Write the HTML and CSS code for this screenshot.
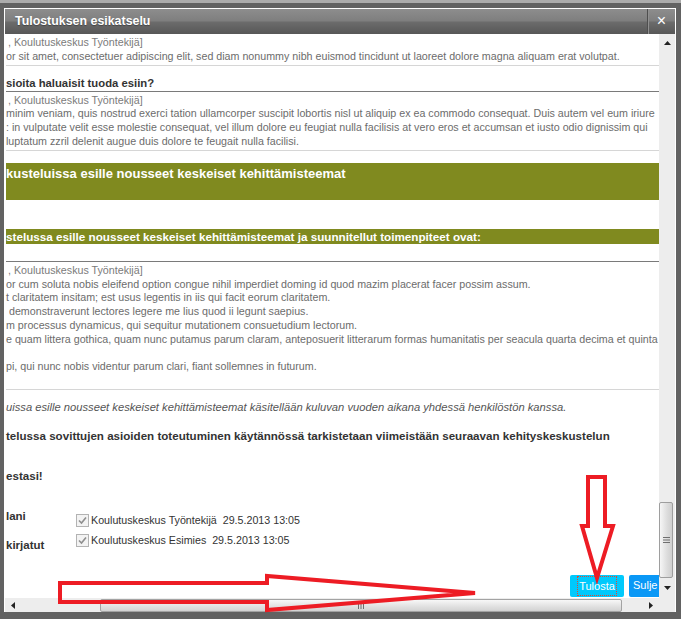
FILE: index.html
```html
<!DOCTYPE html>
<html lang="fi">
<head>
<meta charset="utf-8">
<title>Tulostuksen esikatselu</title>
<link rel="stylesheet" href="styles.css">
</head>
<body>
<div class="topstrip"></div>
<div class="dialog">
  <div class="titlebar">
    <span class="title">Tulostuksen esikatselu</span>
    <span class="close">×</span>
  </div>
  <div class="main">
    <div class="content">
      <div class="doc">
        <div class="comment">
          <div class="meta">, Koulutuskeskus Työntekijä]</div>
          <div class="text">or sit amet, consectetuer adipiscing elit, sed diam nonummy nibh euismod tincidunt ut laoreet dolore magna aliquam erat volutpat.</div>
        </div>
        <div class="question">sioita haluaisit tuoda esiin?</div>
        <div class="comment c2">
          <div class="meta">, Koulutuskeskus Työntekijä]</div>
          <div class="text">minim veniam, quis nostrud exerci tation ullamcorper suscipit lobortis nisl ut aliquip ex ea commodo consequat. Duis autem vel eum iriure</div>
          <div class="text">: in vulputate velit esse molestie consequat, vel illum dolore eu feugiat nulla facilisis at vero eros et accumsan et iusto odio dignissim qui</div>
          <div class="text">luptatum zzril delenit augue duis dolore te feugait nulla facilisi.</div>
        </div>
        <div class="band">kusteluissa esille nousseet keskeiset kehittämisteemat</div>
        <div class="band2">stelussa esille nousseet keskeiset kehittämisteemat ja suunnitellut toimenpiteet ovat:</div>
        <div class="rule"></div>
        <div class="comment c3">
          <div class="meta">, Koulutuskeskus Työntekijä]</div>
          <div class="text">or cum soluta nobis eleifend option congue nihil imperdiet doming id quod mazim placerat facer possim assum.</div>
          <div class="text">t claritatem insitam; est usus legentis in iis qui facit eorum claritatem.</div>
          <div class="text">&nbsp;demonstraverunt lectores legere me lius quod ii legunt saepius.</div>
          <div class="text">m processus dynamicus, qui sequitur mutationem consuetudium lectorum.</div>
          <div class="text">e quam littera gothica, quam nunc putamus parum claram, anteposuerit litterarum formas humanitatis per seacula quarta decima et quinta</div>
          <div class="text">&nbsp;</div>
          <div class="text">pi, qui nunc nobis videntur parum clari, fiant sollemnes in futurum.</div>
        </div>
        <p class="note">uissa esille nousseet keskeiset kehittämisteemat käsitellään kuluvan vuoden aikana yhdessä henkilöstön kanssa.</p>
        <p class="strong">telussa sovittujen asioiden toteutuminen käytännössä tarkistetaan viimeistään seuraavan kehityskeskustelun</p>
        <p class="strong thanks">estasi!</p>
        <div class="signs">
          <div class="labels">
            <span>lani</span>
            <span>kirjatut</span>
          </div>
          <div class="checks">
            <div class="check">
              <svg class="box" width="13" height="13" viewBox="0 0 13 13"><rect x="0.5" y="0.5" width="12" height="12" fill="#f3f3f3" stroke="#b3b3b3"/><path d="M3 6.5 L5.5 9 L10 3.5" fill="none" stroke="#8e8e8e" stroke-width="1.6"/></svg>
              <span>Koulutuskeskus Työntekijä&nbsp; 29.5.2013 13:05</span>
            </div>
            <div class="check">
              <svg class="box" width="13" height="13" viewBox="0 0 13 13"><rect x="0.5" y="0.5" width="12" height="12" fill="#f3f3f3" stroke="#b3b3b3"/><path d="M3 6.5 L5.5 9 L10 3.5" fill="none" stroke="#8e8e8e" stroke-width="1.6"/></svg>
              <span>Koulutuskeskus Esimies&nbsp; 29.5.2013 13:05</span>
            </div>
          </div>
        </div>
        <div class="buttons">
          <span class="btn print"><span class="focus">Tulosta</span></span>
          <span class="btn shut">Sulje</span>
        </div>
      </div>
    </div>
    <div class="vscroll">
      <div class="vbtn up"><svg width="7" height="4" viewBox="0 0 7 4"><path d="M0 4 L3.5 0 L7 4 Z" fill="#222"/></svg></div>
      <div class="vtrack">
        <div class="vthumb">
          <svg width="7" height="8" viewBox="0 0 7 8"><path d="M0 1.5 H7 M0 4 H7 M0 6.5 H7" stroke="#6f6f6f" stroke-width="1"/></svg>
        </div>
      </div>
      <div class="vbtn down"><svg width="7" height="4" viewBox="0 0 7 4"><path d="M0 0 L3.5 4 L7 0 Z" fill="#222"/></svg></div>
    </div>
  </div>
  <div class="hbar">
    <div class="htrack">
      <div class="hbtn"><svg width="4" height="7" viewBox="0 0 4 7"><path d="M4 0 L0 3.5 L4 7 Z" fill="#222"/></svg></div>
      <div class="hthumb">
        <svg width="8" height="7" viewBox="0 0 8 7"><path d="M1.5 0 V7 M4 0 V7 M6.5 0 V7" stroke="#6f6f6f" stroke-width="1"/></svg>
      </div>
      <div class="hbtn right"><svg width="4" height="7" viewBox="0 0 4 7"><path d="M0 0 L4 3.5 L0 7 Z" fill="#222"/></svg></div>
    </div>
    <div class="corner"></div>
  </div>
</div>
<svg class="arrows" width="681" height="619" viewBox="0 0 681 619">
  <polygon points="588,477 605,477 605,526 613,526 597,578 582,526 588,526" fill="none" stroke="#ed1c24" stroke-width="4" stroke-linejoin="miter"/>
  <polygon points="60,583 267,583 267,576 475,593 267,610 267,602 60,602" fill="none" stroke="#ed1c24" stroke-width="4" stroke-linejoin="miter"/>
</svg>
</body>
</html>
```
FILE: styles.css
```css
html, body {
  margin: 0;
  padding: 0;
}
body {
  width: 681px;
  height: 619px;
  overflow: hidden;
  position: relative;
  background: #626262;
  font-family: "Liberation Sans", Arial, sans-serif;
}
.topstrip {
  height: 3px;
  background: #acacac;
}
.dialog {
  margin: 5px 0 0 4px;
  width: 670px;
  border: 1px solid #ffffff;
  border-bottom: 0;
}
.titlebar {
  display: flex;
  height: 25px;
  background: linear-gradient(#8d8d8d, #7f7f7f 46%, #6b6b6b 54%, #575757);
}
.title {
  flex: 1;
  padding-left: 10px;
  color: #ffffff;
  font-weight: bold;
  font-size: 12.4px;
  line-height: 25px;
  text-shadow: 0 1px 1px rgba(0, 0, 0, 0.35);
}
.close {
  width: 27px;
  border-left: 1px solid #4e4e4e;
  box-shadow: inset 1px 0 0 #909090;
  color: #ffffff;
  font-size: 16px;
  line-height: 24px;
  text-align: center;
}
.main {
  display: flex;
  height: 564px;
}
.content {
  width: 654px;
  overflow: hidden;
  background: #ffffff;
}
.doc {
  padding: 2px 0 0 1px;
  white-space: nowrap;
  font-size: 10.7px;
  line-height: 13.8px;
  color: #6c6c6c;
}
.meta {
  padding-left: 2px;
  color: #7b7b7b;
}
.comment {
  border-bottom: 1px solid #d6d6d6;
  padding-bottom: 1px;
}
.c2 {
  padding-top: 2px;
}
.c3 {
  padding-top: 2px;
  padding-bottom: 15px;
}
.question {
  margin-top: 10px;
  font-weight: bold;
  font-size: 11.3px;
  line-height: 15px;
  color: #333333;
  border-bottom: 1px solid #7a7a7a;
}
.band {
  margin-top: 12px;
  height: 35px;
  padding-top: 2px;
  background: #808a1f;
  color: #ffffff;
  font-weight: bold;
  font-size: 13px;
  line-height: 17px;
}
.band2 {
  margin-top: 29px;
  height: 15px;
  line-height: 15px;
  background: #808a1f;
  color: #ffffff;
  font-weight: bold;
  font-size: 11.7px;
}
.rule {
  margin-top: 17px;
  border-top: 1px solid #7a7a7a;
}
.note {
  margin: 11px 0 0;
  font-style: italic;
  font-size: 11.2px;
  color: #555555;
}
.strong {
  margin: 13px 0 0;
  font-weight: bold;
  font-size: 11.6px;
  line-height: 15px;
  color: #333333;
}
.thanks {
  margin-top: 25px;
}
.signs {
  display: flex;
  margin-top: 26px;
}
.labels {
  width: 70px;
  display: flex;
  flex-direction: column;
  gap: 14px;
  font-weight: bold;
  font-size: 11.5px;
  line-height: 15px;
  color: #333333;
}
.checks {
  padding-top: 5px;
  display: flex;
  flex-direction: column;
  gap: 6px;
  color: #333333;
}
.check {
  display: flex;
  align-items: center;
  gap: 2px;
  height: 14px;
}
.box {
  flex-shrink: 0;
}
.buttons {
  display: flex;
  gap: 5px;
  margin-top: 22px;
  padding-left: 564px;
}
.btn {
  flex-shrink: 0;
  display: flex;
  align-items: center;
  height: 22px;
  border-radius: 2px;
  color: #ffffff;
  font-size: 11px;
}
.print {
  width: 54px;
  justify-content: center;
  background: #00c9fc;
}
.focus {
  outline: 1px dotted #e8452c;
  padding: 2px 1px;
  line-height: 14px;
}
.shut {
  width: 60px;
  padding-left: 4px;
  background: #0a98f6;
}
.vscroll {
  width: 16px;
  display: flex;
  flex-direction: column;
  background: #ededed;
}
.vbtn {
  display: flex;
  align-items: center;
  justify-content: center;
}
.up {
  height: 17px;
}
.down {
  height: 20px;
}
.vtrack {
  flex: 1;
  display: flex;
  flex-direction: column;
  justify-content: flex-end;
}
.vthumb {
  box-sizing: border-box;
  width: 14px;
  height: 76px;
  border: 1px solid #9e9e9e;
  border-radius: 2px;
  background: linear-gradient(to right, #f6f6f6, #dcdcdc 60%, #cfcfcf);
  display: flex;
  align-items: center;
  justify-content: center;
}
.hbar {
  display: flex;
  height: 14px;
}
.htrack {
  width: 654px;
  display: flex;
  align-items: center;
  background: #ededed;
}
.hbtn {
  width: 16px;
  height: 14px;
  display: flex;
  align-items: center;
  justify-content: center;
}
.hbtn.right {
  margin-left: auto;
  width: 17px;
}
.hthumb {
  box-sizing: border-box;
  margin-left: 79px;
  width: 522px;
  height: 13px;
  border: 1px solid #a3a3a3;
  border-radius: 2px;
  background: linear-gradient(#f7f7f7, #e2e2e2 55%, #d2d2d2);
  display: flex;
  align-items: center;
  justify-content: center;
}
.corner {
  width: 16px;
  background: #ededed;
}
.arrows {
  position: absolute;
  left: 0;
  top: 0;
  pointer-events: none;
}
```
